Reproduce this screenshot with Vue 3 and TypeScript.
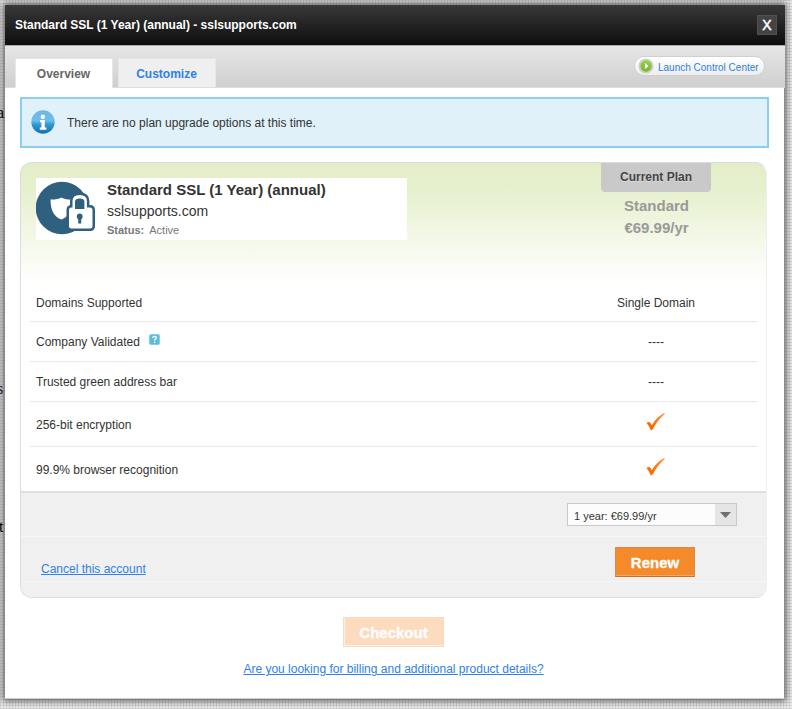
<script setup lang="ts">
import { ref } from 'vue'

interface Feature {
  label: string
  value?: string
  check?: boolean
  help?: boolean
  height: number
}

const tab = ref('Overview')
const tabs: string[] = ['Overview', 'Customize']
const features: Feature[] = [
  { label: 'Domains Supported', value: 'Single Domain', height: 39 },
  { label: 'Company Validated', value: '----', help: true, height: 40 },
  { label: 'Trusted green address bar', value: '----', height: 40 },
  { label: '256-bit encryption', check: true, height: 45 },
  { label: '99.9% browser recognition', check: true, height: 44 },
]
</script>

<template>
  <div class="page">
    <span class="behind one">a</span>
    <span class="behind two">s</span>
    <span class="behind three">t</span>
    <div class="dialog">
      <header class="title">
        <h1>Standard SSL (1 Year) (annual) - sslsupports.com</h1>
        <button class="close">X</button>
      </header>
      <nav class="bar">
        <div class="tabs">
          <button v-for="t in tabs" :key="t" class="tab" :class="{ active: t === tab }" @click="tab = t">{{ t }}</button>
        </div>
        <a class="launch">
          <svg width="18" height="18" viewBox="0 0 18 18">
            <defs>
              <linearGradient id="go" x1="0" y1="0" x2="0" y2="1">
                <stop offset="0" stop-color="#9bd04a" /><stop offset="1" stop-color="#76b82a" />
              </linearGradient>
            </defs>
            <circle cx="9" cy="9" r="7.600" fill="#cfcfcf" />
            <circle cx="9" cy="9" r="5.700" fill="url(#go)" />
            <path d="M8 6v6l3.500-3z" fill="#fff" />
          </svg>
          <span>Launch Control Center</span>
        </a>
      </nav>
      <main class="content">
        <div class="notice">
          <svg width="24" height="24" viewBox="0 0 24 24">
            <defs>
              <linearGradient id="info" x1="0" y1="0" x2="0" y2="1">
                <stop offset="0" stop-color="#6fb7e2" /><stop offset=".45" stop-color="#6cbdea" /><stop offset=".6" stop-color="#3397d3" /><stop offset="1" stop-color="#176fae" />
              </linearGradient>
            </defs>
            <circle cx="12" cy="12" r="11.700" fill="url(#info)" />
            <circle cx="11.800" cy="6.800" r="2.200" fill="#fff" />
            <path d="M9 10h4.800v7.600h1.600v2.200H8.800v-2.200h1.600v-5.400H9z" fill="#fff" />
          </svg>
          <span>There are no plan upgrade options at this time.</span>
        </div>

        <section class="plan">
          <div class="plan-head">
            <div class="product">
              <svg class="logo" width="60" height="54" viewBox="0 0 60 54">
                <circle cx="26" cy="27" r="26.300" fill="#30607f" />
                <path d="M14.500 18.500c4 .2 8-.5 11-2 3 1.500 6 2.200 9.500 2v5c0 8-4 13-9.500 15C18.500 36 14.500 30 14.500 18.500z" fill="#fff" />
                <path d="M36.500 26.500V20q0-6 7.200-6t7.200 6v6.500h3q2.600 0 2.600 2.500v16q0 2.500-2.500 2.500H35.500Q33 47.500 33 45V29q0-2.500 2.500-2.500z" fill="#fff" stroke="#30607f" stroke-width="5" stroke-linejoin="round" paint-order="stroke" />
                <path d="M39 28v-7.200q0-3.300 4.700-3.300t4.700 3.300V28z" fill="#30607f" />
                <circle cx="43.700" cy="35.500" r="2.900" fill="#30607f" />
                <path d="M42.200 36h3v6.500h-3z" fill="#30607f" />
              </svg>
              <div class="product-text">
                <h2>Standard SSL (1 Year) (annual)</h2>
                <p class="domain">sslsupports.com</p>
                <p class="status"><b>Status:</b>Active</p>
              </div>
            </div>
            <div class="current">
              <div class="badge">Current Plan</div>
              <div class="price">Standard<br />€69.99/yr</div>
            </div>
          </div>

          <div class="features">
            <div v-for="f in features" :key="f.label" class="feature" :style="{ height: f.height + 'px' }">
              <div class="name">
                {{ f.label }}
                <svg v-if="f.help" class="help" width="11" height="11" viewBox="0 0 11 11">
                  <rect x=".3" y=".3" width="10.400" height="10.400" rx="1.500" fill="#5bbbe1" />
                  <path d="M3.800 4q0-1.700 1.800-1.700T7.300 4Q7.300 4.800 6.200 5.300 5.600 5.600 5.600 6.700M5.600 7.700V9" fill="none" stroke="#fff" stroke-width="1.300" />
                </svg>
              </div>
              <div class="value">
                <svg v-if="f.check" class="check" width="20" height="20" viewBox="0 0 20 20">
                  <defs>
                    <linearGradient id="tick" x1="0" y1="1" x2="1" y2="0">
                      <stop offset=".3" stop-color="#ff6a00" /><stop offset="1" stop-color="#ff9a50" />
                    </linearGradient>
                  </defs>
                  <path d="M.6 11Q2.800 9.300 4.200 10.600L5.800 13.300Q10.500 4.800 18.200 1L18.800 1.900Q11.500 8 6.800 17.200L4.900 18.600Q3.300 14 .6 11z" fill="url(#tick)" />
                </svg>
                <template v-else>{{ f.value }}</template>
              </div>
            </div>
          </div>

          <div class="foot">
            <div class="foot-row first">
              <div class="select">
                <span>1 year: €69.99/yr</span>
                <i><svg width="11" height="6" viewBox="0 0 11 6"><path d="M0 0h11L5.500 6z" fill="#707070" /></svg></i>
              </div>
            </div>
            <div class="foot-row second">
              <a class="cancel">Cancel this account</a>
              <button class="btn renew">Renew</button>
            </div>
          </div>
        </section>

        <div class="bottom">
          <button class="btn checkout" disabled>Checkout</button>
          <a>Are you looking for billing and additional product details?</a>
        </div>
      </main>
    </div>
  </div>
</template>

<style>
body { background: #fff; overflow: hidden; }
</style>

<style scoped>
* { box-sizing: border-box; }
.page {
  position: relative;
  width: 792px; height: 709px; padding: 5px 0 0 5px; overflow: hidden;
  font-family: "Liberation Sans", Arial, sans-serif; font-size: 12px; color: #333;
  background-color: #eee;
  background-image: linear-gradient(#d2d2d2 1px, transparent 1px), linear-gradient(90deg, #d2d2d2 1px, transparent 1px);
  background-size: 3px 3px;
}
.behind { position: absolute; left: -3px; font-family: "Liberation Serif", serif; font-size: 16px; line-height: 18px; color: #000; }
.one { top: 104px; }
.two { top: 380px; left: -3px; color: #224; }
.three { top: 518px; left: -1px; }
h1, h2, p { margin: 0; }
button { font-family: inherit; border: 0; padding: 0; }
a { color: #2f80e8; }
svg { display: block; flex: none; }
.dialog { position: relative; width: 779px; height: 694px; background: #fff; border-bottom: 1px solid #ccc; box-shadow: 0 0 7px 2px rgba(0, 0, 0, .6); }
.title { width: 780px; height: 40px; display: flex; justify-content: space-between; align-items: center; padding: 0 8px 0 10px; background: linear-gradient(#393939, #0d0d0d); }
.title h1 { font-size: 12px; color: #fff; white-space: nowrap; }
.close { width: 20px; height: 20px; background: #444; border: 1px solid #505050; color: #fff; font-size: 14px; line-height: 18px; -webkit-text-stroke: .5px #fff; }
.bar { width: 780px; height: 43px; padding: 10px 20px 0 10px; display: flex; justify-content: space-between; align-items: flex-start; background: linear-gradient(#e6e6e6, #cfcfcf); border-top: 1px solid #aaa; border-bottom: 1px solid #ddd; }
.tabs { display: flex; gap: 5px; }
.tab { width: 98px; height: 29px; margin-top: 2px; padding: 1px 1px 0 0; border: 1px solid #e6e6e6; border-bottom: 0; background: #efefef; font-size: 12px; font-weight: bold; color: #2f80e8; }
.tab.active { height: 30px; background: #fff; color: #666; }
.launch { display: flex; align-items: center; width: 131px; height: 20px; padding-left: 2px; gap: 3px; border: 1px solid #d0d0d0; border-radius: 10px; background: linear-gradient(#fff, #eee); font-size: 10px; white-space: nowrap; }
.launch span { padding-top: 2px; }
.content { padding: 9px 15px 0; }
.notice { width: 749px; height: 51px; display: flex; align-items: center; gap: 12px; padding-left: 9px; border: 2px solid #8ccfec; background: #e0f1f9; }
.notice svg { margin-top: -2px; }
.plan { width: 747px; height: 436px; margin-top: 14px; border: 1px solid #dcdcdf; border-right-color: #eee; border-radius: 12px; background: linear-gradient(#e3eec8 0, #e6f0cd 25px, #fff 120px); overflow: hidden; }
.plan-head { height: 120px; display: flex; justify-content: space-between; padding: 0 55px 0 15px; }
.product { display: flex; width: 371px; height: 62px; margin-top: 15px; padding-top: 3px; background: #fff; }
.product-text { padding-left: 11px; }
h2 { font-size: 15px; line-height: 17px; color: #333; white-space: nowrap; }
.domain { font-size: 14px; line-height: 26px; }
.status { font-size: 11px; line-height: 13px; color: #777; }
.status b { margin-right: 5px; }
.current { width: 110px; text-align: center; }
.badge { height: 29px; line-height: 29px; background: #c9c9c9; border-radius: 0 0 4px 4px; color: #444; font-weight: bold; text-shadow: 0 1px #ddd; }
.price { margin-top: 3px; padding-left: 1px; font-size: 15px; line-height: 22px; font-weight: bold; color: #999; }
.feature { display: flex; align-items: center; width: 727px; margin-left: 9px; background: repeating-linear-gradient(90deg, #ddd 0 1px, #f5f5f5 1px 2px) bottom / 100% 1px no-repeat; }
.feature:last-child { background: none; padding-top: 1px; }
.name { display: flex; width: 526px; padding-left: 6px; }
.help { margin: -1px 0 0 9px; }
.value { width: 200px; display: flex; justify-content: center; }
.check { margin: -5px 1px 0 0; }
.foot { height: 110px; background: #f0f0f0; border-top: 2px solid #dedede; }
.foot-row { display: flex; height: 45px; border-bottom: 1px solid #f7f7f7; }
.first { height: 44px; justify-content: flex-end; padding: 10px 29px 0 0; }
.select { display: flex; width: 170px; height: 23px; background: #fcfcfc; border: 1px solid #c9c9c9; font-size: 11px; line-height: 25px; }
.select span { flex: 1; padding-left: 6px; }
.select i { width: 21px; background: #e5e5e5; display: flex; align-items: center; justify-content: center; }
.second { justify-content: space-between; padding: 10px 71px 0 20px; }
.cancel, .bottom a { text-decoration: underline; }
.cancel { margin-top: 15px; }
.btn { background: #f58a2a; border: 1px solid #d98a4b; border-bottom-color: #d4701d; box-shadow: inset 0 -1px #efa766; color: #fff; font-size: 15px; font-weight: bold; }
.renew { width: 80px; height: 30px; -webkit-text-stroke: .3px #fff; }
.bottom { display: flex; flex-direction: column; align-items: center; width: 747px; padding-top: 19px; }
.checkout { width: 101px; height: 30px; margin-bottom: 15px; background: #fcdbbf; border-color: #f6dcc7; box-shadow: inset 1px -1px #fff0e4; -webkit-text-stroke: .3px #fff; }
</style>
